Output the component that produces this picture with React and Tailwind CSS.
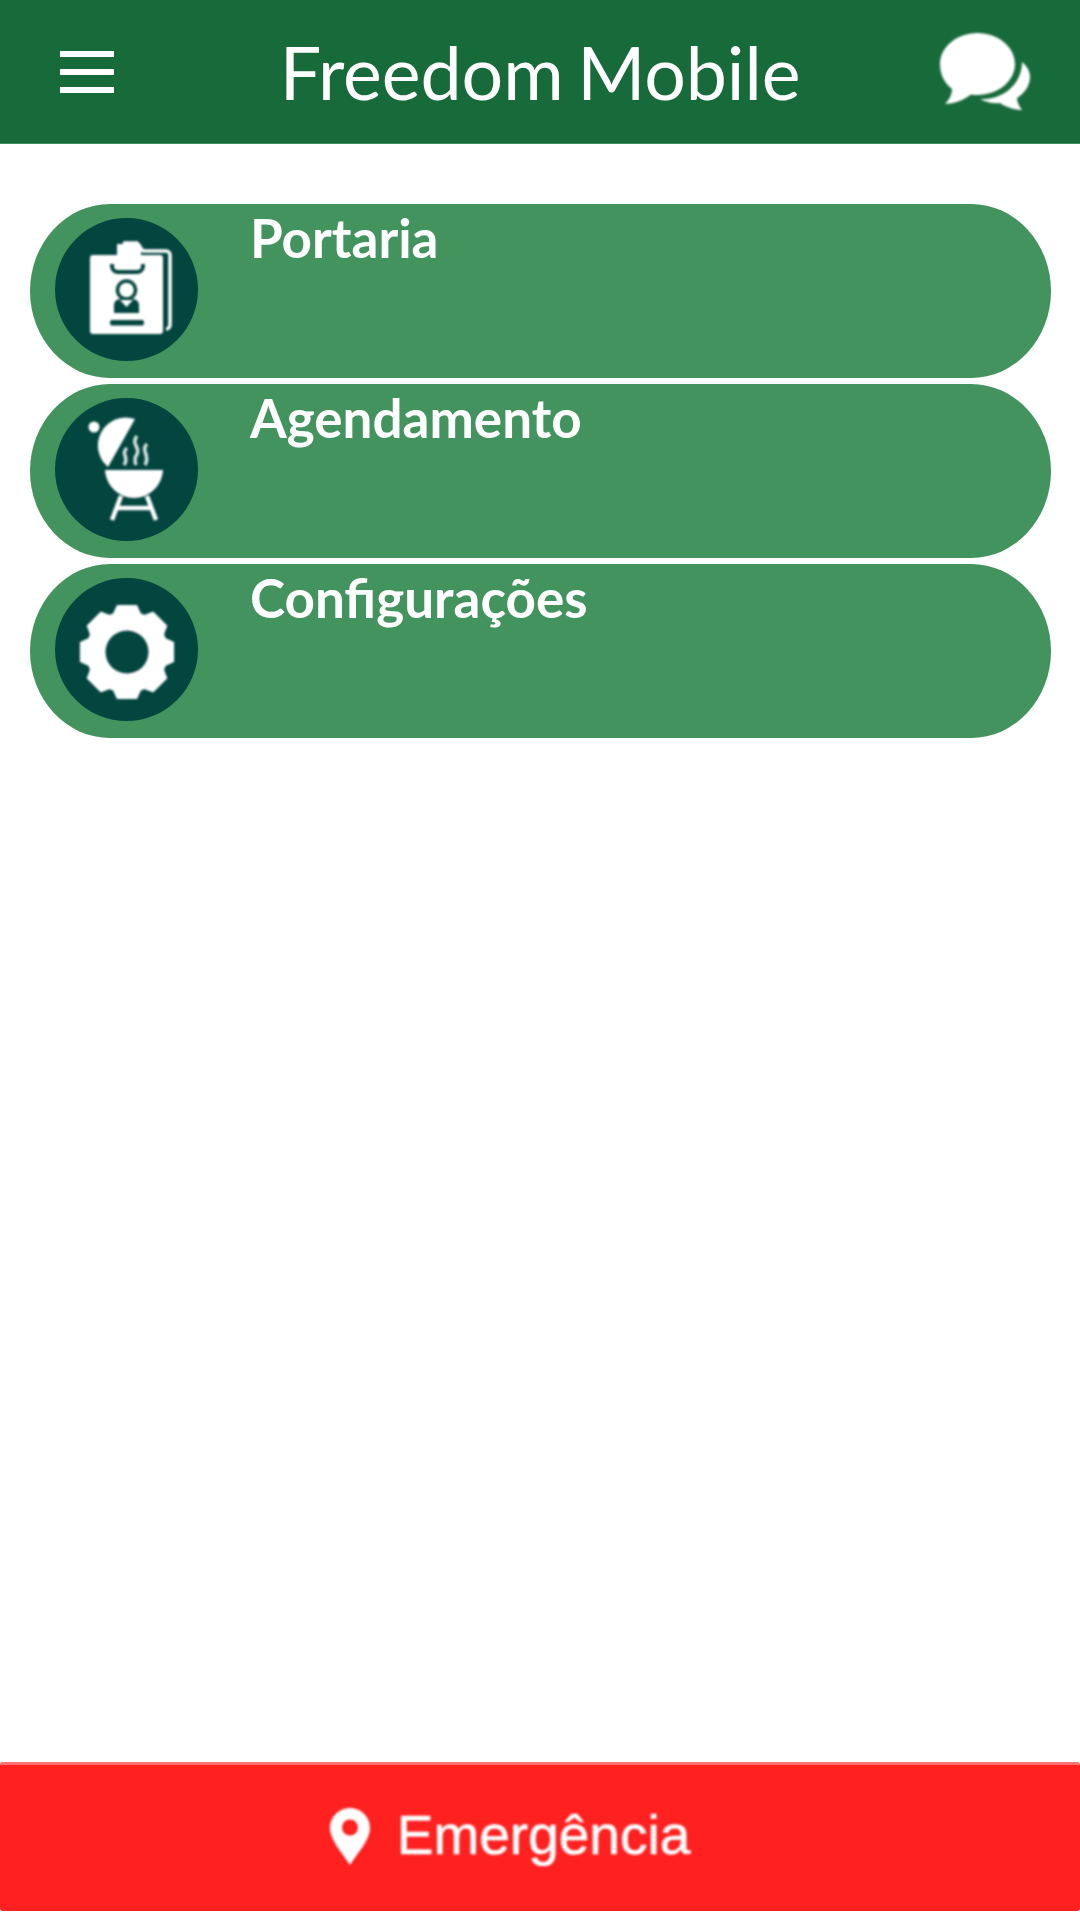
const gearPath = (() => {
  const cx = 72, cy = 74, teeth = 8, ro = 47, ri = 40;
  const pts = [];
  for (let i = 0; i < teeth; i++) {
    const a = (i * 2 * Math.PI) / teeth - Math.PI / 2;
    const s = (2 * Math.PI) / teeth;
    [[-0.5, ri], [-0.3, ro], [0.3, ro], [0.5, ri]].forEach(([f, r]) => {
      pts.push([cx + r * Math.cos(a + f * s * 0.85), cy + r * Math.sin(a + f * s * 0.85)]);
    });
  }
  return "M" + pts.map((p) => p[0].toFixed(1) + " " + p[1].toFixed(1)).join("L") + "Z";
})();

function Badge() {
  return (
    <svg viewBox="0 0 143 143" className="w-full h-full blur-[0.8px]">
      <path d="M68 25h14l6 8h23a4 4 0 0 1 4 4v70a4 4 0 0 1-4 4" fill="none" stroke="#fff" strokeWidth="3.500" />
      <rect x="35" y="37" width="73" height="79" rx="3" fill="#fff" />
      <path d="M57 46v2a6 6 0 0 0 6 6h19a6 6 0 0 0 6-6v-2" fill="none" stroke="#03453f" strokeWidth="4" />
      <path d="M62 26h24v20H62z" fill="#fff" />
      <circle cx="71.500" cy="72" r="9" fill="#fff" stroke="#03453f" strokeWidth="3.500" />
      <path d="M59 95v-8a6 6 0 0 1 6-6h13a6 6 0 0 1 6 6v8z" fill="#03453f" />
      <path d="M65 82l6.500 7 6.500-7z" fill="#fff" />
      <rect x="55" y="102" width="34" height="5.500" rx="2" fill="#03453f" />
    </svg>
  );
}

function Grill() {
  return (
    <svg viewBox="0 0 143 143" className="w-full h-full blur-[0.8px]">
      <path d="M80 21A28 28 0 0 0 53 69Z" fill="#fff" />
      <circle cx="39" cy="29" r="5.500" fill="#fff" />
      <g fill="none" stroke="#fff" strokeWidth="3.500" opacity="0.85">
        <path d="M72 50c-7 6 3 9-3 17" />
        <path d="M82 38c-7 8 5 12-1 20c-2 3-1 6 0 9" />
        <path d="M92 46c-7 7 4 11-2 21" />
      </g>
      <path d="M50 72H108C107 88 94 100 79 100C64 100 51 88 50 72Z" fill="#fff" />
      <path d="M66 98L57 122M92 98L101 122M61 110H97" fill="none" stroke="#fff" strokeWidth="4.500" />
    </svg>
  );
}

function Gear() {
  return (
    <svg viewBox="0 0 143 143" className="w-full h-full blur-[0.8px]">
      <path d={gearPath} fill="#fff" stroke="#fff" strokeWidth="2" strokeLinejoin="round" />
      <circle cx="72" cy="74" r="21.500" fill="#03453f" />
    </svg>
  );
}

function MenuItem({ label, children }) {
  return (
    <div className="flex items-start h-[174px] rounded-[80px/87px] bg-[#43935e] pl-[25px] pt-[14px]">
      <div className="w-[143px] h-[143px] rounded-full bg-[#03453f] shrink-0">{children}</div>
      <div className="ml-[52px] -mt-[15px] text-[53px] leading-[70px] font-bold text-white">{label}</div>
    </div>
  );
}

export default function App() {
  return (
    <div className="h-[1920px] flex flex-col bg-white font-['Lato','Noto_Sans',sans-serif]">
      <header className="h-[144px] bg-[#176b3a] border-b border-[#3f8f5c] flex items-center pl-[60px] pr-[50px] shrink-0">
        <div className="flex-1">
          <div className="flex flex-col gap-[12px] w-[54px]">
            <div className="h-[6px] bg-white" />
            <div className="h-[6px] bg-white" />
            <div className="h-[6px] bg-white" />
          </div>
        </div>
        <div className="mr-[10px] text-[73.500px] leading-none text-white tracking-[-0.1px] [word-spacing:-5px]">Freedom Mobile</div>
        <div className="flex-1 flex justify-end">
          <svg viewBox="0 0 90 77" className="w-[90px] h-[77px] blur-[0.8px]">
            <path d="M37.500 0C58 0 75 14 75 31C75 48 58 62 37.500 62C35 62 33 62 31 61.500C24 67 14 71 5 71C9 67 12 62 12 56C4 50 0 41 0 31C0 14 17 0 37.500 0Z" fill="#fff" />
            <path d="M82 29C87 33 90 38 90 44C90 52 85 60 77 65C77 69 79 73 82 77C74 77 66 74 60 70C53 71 46 69 40 66C62 67 82 52 82 29Z" fill="#fff" />
          </svg>
        </div>
      </header>
      <main className="flex flex-col gap-[6px] pt-[60px] pl-[30px] pr-[29px]">
        <MenuItem label="Portaria"><Badge /></MenuItem>
        <MenuItem label="Agendamento"><Grill /></MenuItem>
        <MenuItem label="Configurações"><Gear /></MenuItem>
      </main>
      <footer className="mt-auto mb-[9px] h-[149px] rounded-[3px] bg-[#ff2020] border-t-[3px] border-[#ff7070] flex items-center justify-center gap-[27px] pr-[60px] text-white shrink-0">
        <svg viewBox="0 0 40 57" className="w-[40px] h-[57px] -mt-[3px] blur-[0.8px]">
          <path fillRule="evenodd" d="M20 0C31 0 40 9 40 20C40 32 27 46 20 57C13 46 0 32 0 20C0 9 9 0 20 0ZM20 11.500A8 8 0 1 0 20 27.500A8 8 0 1 0 20 11.500Z" fill="#fff" />
        </svg>
        <span className="-mt-[5px] font-['Liberation_Sans',sans-serif] text-[55px] leading-none blur-[0.8px] [-webkit-text-stroke:0.6px_white]">Emergência</span>
      </footer>
    </div>
  );
}
